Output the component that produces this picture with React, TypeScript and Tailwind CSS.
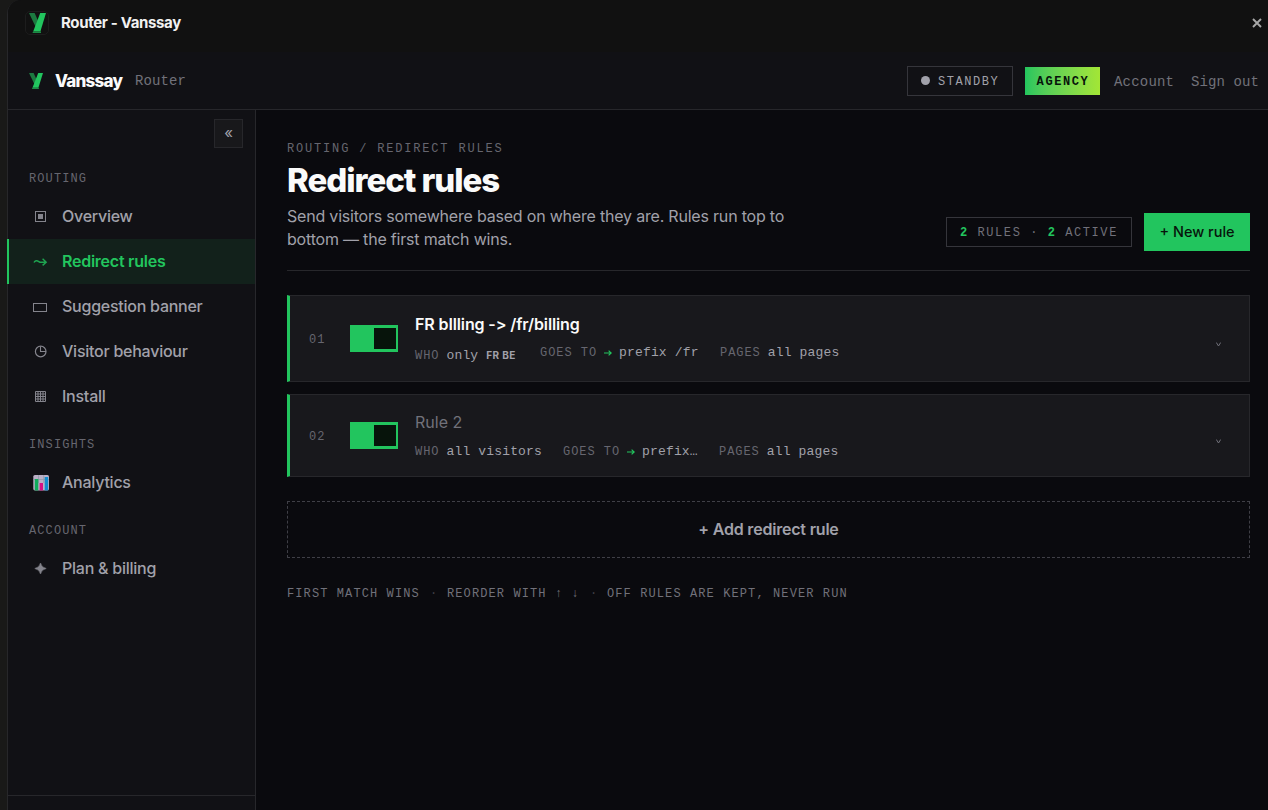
import React from "react";

const MONO = "font-['Liberation_Mono',monospace]"

function Logo({ className }: { className: string }) {
    return (
        <svg className={className} viewBox="0 0 17 20" preserveAspectRatio="none">
            <path d="M0 0H5.6L10 10L7.4 15.6Z" fill="#1c7a40" />
            <path d="M11.2 0H17L11.4 18.4H4.2Z" fill="#22c55e" />
            <path d="M4.2 18.4H12V20H3.4Z" fill="#1c8a45" />
        </svg>
    )
}

function Arrow({ className }: { className: string }) {
    return (
        <svg className={className} viewBox="0 0 8 8" fill="none" stroke="#22c55e" strokeWidth="1.2">
            <path d="M0 4H7.2M4.6 1.6L7.2 4L4.6 6.4" />
        </svg>
    )
}

const icons: Record<string, React.ReactNode> = {
    overview: (
        <>
            <rect x="3.5" y="3.5" width="10" height="10" stroke="currentColor" />
            <rect x="6" y="6" width="5" height="5" fill="currentColor" />
        </>
    ),
    redirect: <path d="M2 9.5C3 7.4 5 7.2 6.8 8.6C7.6 9.3 8.6 9.3 9.6 9.3H14M10.6 5.8L14.2 9.3L10.6 12.4" stroke="currentColor" strokeWidth="1.4" />,
    banner: <rect x="1.5" y="5.5" width="13" height="8" stroke="currentColor" />,
    clock: (
        <>
            <circle cx="8.7" cy="8.5" r="5.3" stroke="currentColor" strokeWidth="1.2" />
            <path d="M8.5 3.4V8.5H14" stroke="currentColor" strokeWidth="1.1" />
        </>
    ),
    grid: (
        <path d="M3.5 3.5H13.5V13.5H3.5ZM3.5 6H13.5M3.5 8.5H13.5M3.5 11H13.5M6 3.5V13.5M8.5 3.5V13.5M11 3.5V13.5" stroke="currentColor" />
    ),
    chart: (
        <>
            <rect x="1.3" y="1" width="15.7" height="15.4" rx="1.6" fill="#c4b8d0" />
            <path d="M1.3 5.5H17M6.5 1V9M11.7 1V9" stroke="#99a2b0" strokeWidth="0.8" />
            <path d="M2.8 5H6.3V16.4H2.8Z" fill="#10b560" />
            <path d="M7.6 9H11V16.4H7.6Z" fill="#e0108a" />
            <path d="M12.7 3H16.2V16.4H12.7Z" fill="#1094d8" />
        </>
    ),
    star: <path d="M8.5 3Q9.5 7.6 14.2 8.5Q9.5 9.4 8.5 14Q7.5 9.4 2.8 8.5Q7.5 7.6 8.5 3Z" fill="currentColor" stroke="currentColor" strokeWidth="0.6" />,
}

const sections = [
    {
        title: "ROUTING",
        items: [
            { icon: "overview", label: "Overview" },
            { icon: "redirect", label: "Redirect rules", active: true },
            { icon: "banner", label: "Suggestion banner" },
            { icon: "clock", label: "Visitor behaviour" },
            { icon: "grid", label: "Install" },
        ],
    },
    { title: "INSIGHTS", items: [{ icon: "chart", label: "Analytics" }] },
    { title: "ACCOUNT", items: [{ icon: "star", label: "Plan & billing" }] },
]

function WindowBar() {
    return (
        <div className="flex h-[52px] items-start justify-between bg-[#111111] pt-[11px] pr-1.5 pl-[17px]">
            <div className="flex items-center gap-3">
                <div className="flex h-6 w-6 items-center justify-center rounded-[5px] border border-[#1d1d1d]">
                    <Logo className="h-5 w-[17px]" />
                </div>
                <span className="text-[15px] leading-6 font-bold tracking-[-0.34px] text-[#f1f1f1]">Router - Vanssay</span>
            </div>
            <svg className="mt-[7px] h-[10px] w-[10px]" viewBox="0 0 10 10" stroke="#a8a8a8" strokeWidth="1.9">
                <path d="M1 1L9 9M9 1L1 9" />
            </svg>
        </div>
    )
}

function Header() {
    return (
        <header className="flex h-[58px] items-center justify-between border-b border-[#27272b] bg-[#111115] pr-[9px] pl-[21px]">
            <div className="flex items-center">
                <Logo className="h-4 w-[14px]" />
                <span className="mt-0.5 ml-3 w-[80px] text-[17px] font-extrabold tracking-[-0.75px] text-[#fafafa]">Vanssay</span>
                <span className={`${MONO} mt-0.5 text-[14px] tracking-[0.1px] text-[#71717a]`}>Router</span>
            </div>
            <div className={`${MONO} flex items-center`}>
                <div className="flex h-[30px] w-[106px] items-center border border-[#35353b] pl-[13px] text-[12px] tracking-[1.55px] text-[#a1a1aa]">
                    <span className="mr-2 h-[9px] w-[9px] rounded-full bg-[#a1a1aa]" />
                    <span className="mt-0.5">STANDBY</span>
                </div>
                <div className="ml-3 flex h-7 w-[75px] items-center justify-center bg-gradient-to-r from-[#22c55e] to-[#a3e635] pt-0.5 pl-px text-[12px] font-bold tracking-[1.6px] text-[#07140b]">AGENCY</div>
                <a className="mt-[3px] ml-3.5 w-[77px] text-[14px] tracking-[0.2px] text-[#71717a]">Account</a>
                <a className="mt-[3px] w-[68px] text-[14px] tracking-[0.1px] whitespace-nowrap text-[#71717a]">Sign out</a>
            </div>
        </header>
    )
}

function Sidebar() {
    return (
        <aside className="-ml-px flex w-[249px] shrink-0 flex-col border-r border-[#27272b]">
            <div className="flex h-[43px] justify-end pt-[9px] pr-3">
                <button className="flex h-[29px] w-[29px] items-center justify-center border border-[#27272b] bg-[#18181b] text-[15px] text-[#a1a1aa]">«</button>
            </div>
            {sections.map((section) => (
                <div key={section.title}>
                    <div className={`${MONO} flex h-[41px] items-end pb-[7px] pl-[22px] text-[12px] leading-4 tracking-[1.1px] text-[#66666f]`}>{section.title}</div>
                    {section.items.map((item) => (
                        <a
                            key={item.label}
                            className={`flex h-[45px] items-center text-[16px] tracking-[-0.25px] ${item.active ? "border-l-2 border-[#22c55e] bg-[#12211b] pl-[23px] font-semibold text-[#22c55e]" : "pl-[25px] font-medium text-[#a1a1aa]"}`}
                        >
                            <svg className={`mr-3 h-[18px] w-[18px] ${item.icon === "chart" ? "opacity-95" : "opacity-80"}`} viewBox="0 0 18 18" fill="none">{icons[item.icon]}</svg>
                            <span className="-mt-0.5">{item.label}</span>
                        </a>
                    ))}
                </div>
            ))}
            <div className="mt-auto h-[15px] border-t border-[#27272b]" />
        </aside>
    )
}

function Meta({ label, arrow, children, className }: { label: string; arrow?: boolean; children: React.ReactNode; className?: string }) {
    return (
        <div className={`flex items-center whitespace-nowrap ${className ?? ""}`}>
            <span className="text-[12px] tracking-[0.95px] text-[#66666f]">{label}</span>
            {arrow && <Arrow className="ml-[7px] h-2 w-2" />}
            <span className="ml-[7px] text-[13px] tracking-[0.16px] text-[#a1a1aa]">{children}</span>
        </div>
    )
}

function RuleCard({ number, className, title, children }: { number: string; className: string; title: React.ReactNode; children: React.ReactNode }) {
    return (
        <div className={`flex items-center border border-l-3 border-[#27272b] border-l-[#22c55e] bg-[#18181c] ${className}`}>
            <span className={`${MONO} mt-0.5 ml-[19px] w-[41px] text-[12px] tracking-[1px] text-[#66666f]`}>{number}</span>
            <button className="flex h-[27px] w-12 shrink-0 items-center justify-end bg-[#22c55e] pr-0.5">
                <span className="h-[21px] w-[22px] bg-[#07140b]" />
            </button>
            <div className="ml-[17px] flex-1">
                {title}
                <div className={`${MONO} flex`}>{children}</div>
            </div>
            <svg className="mt-3 mr-7 h-[5px] w-[5px]" viewBox="0 0 5 5" fill="none" stroke="#71717a">
                <path d="M0.3 0.5L2.5 4L4.7 0.5" />
            </svg>
        </div>
    )
}

function Main() {
    return (
        <main className="flex-1 bg-[#0a0a0e] pt-[29px] pr-[18px] pl-[31px]">
            <div className="flex h-[132px] items-end justify-between border-b border-[#27272b] pb-[19px]">
                <div className="w-[520px]">
                    <div className={`${MONO} h-[18px] pt-px text-[12px] leading-[18px] tracking-[1.82px] text-[#66666f]`}>ROUTING / REDIRECT RULES</div>
                    <h1 className="text-[33px] leading-[46px] font-extrabold tracking-[-1.05px] text-[#fafafa]">Redirect rules</h1>
                    <p className="mt-0.5 text-[16px] leading-[23px] tracking-[-0.2px] text-[#a1a1aa]">
                        Send visitors somewhere based on where they are. Rules run top to
                        <br />
                        bottom — the first match wins.
                    </p>
                </div>
                <div className="flex items-center gap-3">
                    <div className={`${MONO} flex h-[30px] w-[186px] items-center border border-[#35353b] pt-0.5 pl-[13px] text-[12px] tracking-[1.57px] whitespace-pre text-[#71717a]`}>
                        <b className="text-[#22c55e]">2</b> RULES · <b className="text-[#22c55e]">2</b> ACTIVE
                    </div>
                    <button className="h-[38px] w-[106px] bg-[#22c55e] text-[14.5px] font-medium text-[#07140b]">+ New rule</button>
                </div>
            </div>

            <RuleCard
                number="01"
                className="mt-6 h-[87px]"
                title={<div className="text-[16px] leading-6 font-semibold tracking-[-0.12px] text-[#fafafa]">FR bIlling -&gt; /fr/billing</div>}
            >
                <Meta label="WHO" className="mt-2.5 h-5 w-[125px]">
                    only <b className="font-['Inter',sans-serif] text-[10px] tracking-[0.4px]">FR BE</b>
                </Meta>
                <Meta label="GOES TO" arrow className="mt-[7px] h-5 w-[180px]">prefix /fr</Meta>
                <Meta label="PAGES" className="mt-[7px] h-5">all pages</Meta>
            </RuleCard>
            <RuleCard
                number="02"
                className="mt-3 h-[83px]"
                title={<div className="text-[16px] leading-6 text-[#71717a]">Rule 2</div>}
            >
                <Meta label="WHO" className="mt-2 h-5 w-[148px]">all visitors</Meta>
                <Meta label="GOES TO" arrow className="mt-2 h-5 w-[156px]">prefix…</Meta>
                <Meta label="PAGES" className="mt-2 h-5">all pages</Meta>
            </RuleCard>

            <button className="mt-6 h-[57px] w-full border border-dashed border-[#3f3f46] pb-0.5 text-[16px] font-semibold tracking-[-0.2px] text-[#a1a1aa]">+ Add redirect rule</button>

            <div className={`${MONO} mt-[27px] flex text-[12px] leading-[18px] tracking-[1.1px] text-[#71717a]`}>
                <span className="w-[143px]">FIRST MATCH WINS</span>
                <span className="w-[17px] text-[#3f3f46]">·</span>
                <span className="w-[143px]">REORDER WITH ↑ ↓</span>
                <span className="w-[17px] text-[#3f3f46]">·</span>
                <span>OFF RULES ARE KEPT, NEVER RUN</span>
            </div>
        </main>
    )
}

export default function App() {
    return (
        <div className="h-[810px] w-[1268px] overflow-hidden bg-[#191918] pl-[7px] font-['Inter',sans-serif]">
            <div className="flex h-full flex-col rounded-tl-[14px] border-l border-[#27272a] bg-[#111115]">
                <div className="overflow-hidden rounded-tl-[13px]">
                    <WindowBar />
                </div>
                <Header />
                <div className="flex flex-1">
                    <Sidebar />
                    <Main />
                </div>
            </div>
        </div>
    )
}
